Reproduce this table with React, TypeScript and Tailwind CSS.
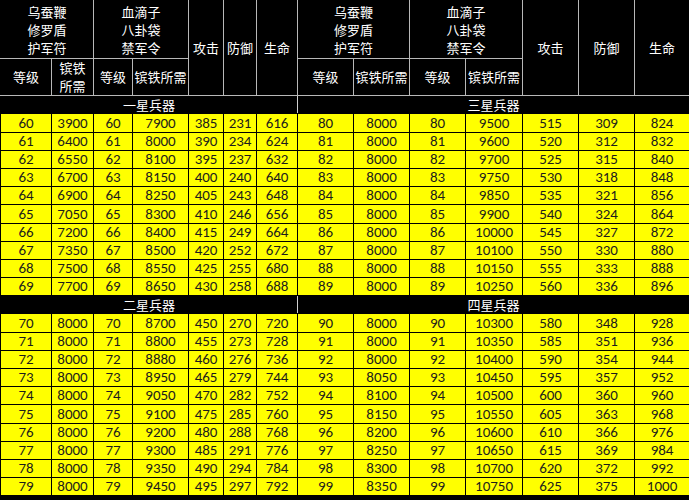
import React from "react";

const left1 = [
  [60, 3900, 60, 7900, 385, 231, 616],
  [61, 6400, 61, 8000, 390, 234, 624],
  [62, 6550, 62, 8100, 395, 237, 632],
  [63, 6700, 63, 8150, 400, 240, 640],
  [64, 6900, 64, 8250, 405, 243, 648],
  [65, 7050, 65, 8300, 410, 246, 656],
  [66, 7200, 66, 8400, 415, 249, 664],
  [67, 7350, 67, 8500, 420, 252, 672],
  [68, 7500, 68, 8550, 425, 255, 680],
  [69, 7700, 69, 8650, 430, 258, 688],
];
const right1 = [
  [80, 8000, 80, 9500, 515, 309, 824],
  [81, 8000, 81, 9600, 520, 312, 832],
  [82, 8000, 82, 9700, 525, 315, 840],
  [83, 8000, 83, 9750, 530, 318, 848],
  [84, 8000, 84, 9850, 535, 321, 856],
  [85, 8000, 85, 9900, 540, 324, 864],
  [86, 8000, 86, 10000, 545, 327, 872],
  [87, 8000, 87, 10100, 550, 330, 880],
  [88, 8000, 88, 10150, 555, 333, 888],
  [89, 8000, 89, 10250, 560, 336, 896],
];
const left2 = [
  [70, 8000, 70, 8700, 450, 270, 720],
  [71, 8000, 71, 8800, 455, 273, 728],
  [72, 8000, 72, 8880, 460, 276, 736],
  [73, 8000, 73, 8950, 465, 279, 744],
  [74, 8000, 74, 9050, 470, 282, 752],
  [75, 8000, 75, 9100, 475, 285, 760],
  [76, 8000, 76, 9200, 480, 288, 768],
  [77, 8000, 77, 9300, 485, 291, 776],
  [78, 8000, 78, 9350, 490, 294, 784],
  [79, 8000, 79, 9450, 495, 297, 792],
];
const right2 = [
  [90, 8000, 90, 10300, 580, 348, 928],
  [91, 8000, 91, 10350, 585, 351, 936],
  [92, 8000, 92, 10400, 590, 354, 944],
  [93, 8050, 93, 10450, 595, 357, 952],
  [94, 8100, 94, 10500, 600, 360, 960],
  [95, 8150, 95, 10550, 605, 363, 968],
  [96, 8200, 96, 10600, 610, 366, 976],
  [97, 8250, 97, 10650, 615, 369, 984],
  [98, 8300, 98, 10700, 620, 372, 992],
  [99, 8350, 99, 10750, 625, 375, 1000],
];

const widths = [
  "w-[51px]", "w-[42px]", "w-[39px]", "w-[56px]", "w-[35px]", "w-[33px]", "w-[41px]",
  "w-[56px]", "w-[56px]", "w-[56px]", "w-[57px]", "w-[56px]", "w-[56px]", "w-[55px]",
];

const hd = "border border-[#b8b8b8] text-white text-[13px] leading-[18px] text-center align-middle p-0 font-normal";
const dc = "border border-black text-[#1c1c1c] text-[15px] leading-none text-center align-middle p-0";

function DataRows({ l, r }: { l: number[][]; r: number[][] }) {
  return (
    <>
      {l.map((row, i) => (
        <tr key={i} className={i === 0 || i === 5 ? "h-[19px] bg-[#ffff00]" : "h-[18px] bg-[#ffff00]"}>
          {[...row, ...r[i]].map((v, j) => (
            <td key={j} className={dc}>
              {v}
            </td>
          ))}
        </tr>
      ))}
    </>
  );
}

function Section({ a, b }: { a: string; b: string }) {
  return (
    <tr className="h-[18px] bg-black" style={{ fontFamily: '"Noto Sans CJK SC", sans-serif' }}>
      <td colSpan={7} className="border border-[#d0d0d0] border-b-black border-l-black text-white text-[13px] leading-none text-center p-0">
        {a}
      </td>
      <td colSpan={7} className="border border-[#d0d0d0] border-b-black text-white text-[13px] leading-none text-center p-0">
        {b}
      </td>
    </tr>
  );
}

function HeadGroup({ first }: { first: boolean }) {
  return (
    <>
      <th colSpan={2} className={`${hd} border-t-black ${first ? "border-l-black" : ""}`}>
        乌蚕鞭<br />修罗盾<br />护军符
      </th>
      <th colSpan={2} className={`${hd} border-t-black`}>
        血滴子<br />八卦袋<br />禁军令
      </th>
      <th rowSpan={2} className={`${hd} border-t-black`}>攻击</th>
      <th rowSpan={2} className={`${hd} border-t-black`}>防御</th>
      <th rowSpan={2} className={`${hd} border-t-black`}>生命</th>
    </>
  );
}

export default function App() {
  return (
    <div
      className="w-[689px] h-[500px] bg-black overflow-hidden"
      style={{ fontFamily: 'Carlito, "Liberation Sans Narrow", Roboto, sans-serif' }}
    >
      <table className="table-fixed border-collapse w-[689px] bg-black">
        <colgroup>
          {widths.map((w, i) => (
            <col key={i} className={w} />
          ))}
        </colgroup>
        <thead>
          <tr className="h-[58px]" style={{ fontFamily: '"Noto Sans CJK SC", sans-serif' }}>
            <HeadGroup first />
            <HeadGroup first={false} />
          </tr>
          <tr className="h-[34px]" style={{ fontFamily: '"Noto Sans CJK SC", sans-serif' }}>
            <th className={`${hd} border-l-black`}>等级</th>
            <th className={hd}>
              镔铁<br />所需
            </th>
            <th className={hd}>等级</th>
            <th className={hd}>镔铁所需</th>
            <th className={hd}>等级</th>
            <th className={hd}>镔铁所需</th>
            <th className={hd}>等级</th>
            <th className={hd}>镔铁所需</th>
          </tr>
        </thead>
        <tbody>
          <Section a="一星兵器" b="三星兵器" />
          <DataRows l={left1} r={right1} />
          <Section a="二星兵器" b="四星兵器" />
          <DataRows l={left2} r={right2} />
        </tbody>
      </table>
    </div>
  );
}
